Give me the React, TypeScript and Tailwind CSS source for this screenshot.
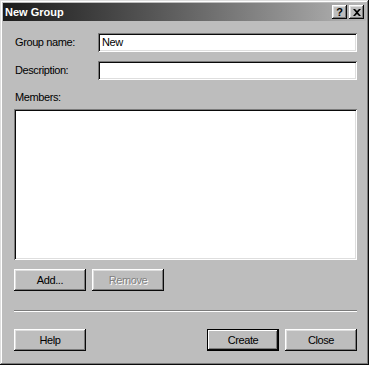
import React from 'react';

const raised =
  'shadow-[inset_-1px_-1px_#0a0a0a,inset_1px_1px_#ffffff,inset_-2px_-2px_#7b7b7b,inset_2px_2px_#dedede]';
const sunken =
  'shadow-[inset_1px_1px_#7b7b7b,inset_-1px_-1px_#ffffff,inset_2px_2px_#0a0a0a,inset_-2px_-2px_#dedede]';

const Button: React.FC<{ label: string; disabled?: boolean; isDefault?: boolean; className?: string }> = ({
  label,
  disabled,
  isDefault,
  className = '',
}) => (
  <button
    className={`h-[22px] w-[72px] bg-[#bdbdbd] text-[11px] tracking-[-0.4px] flex items-center justify-center ${
      isDefault
        ? 'border border-black shadow-[inset_-1px_-1px_#0a0a0a,inset_1px_1px_#ffffff,inset_-2px_-2px_#7b7b7b]'
        : raised
    } ${disabled ? 'text-[#808080] [text-shadow:1px_1px_0_#ffffff]' : 'text-black'} ${className}`}
  >
    {label}
  </button>
);

const TitleButton: React.FC<{ children: React.ReactNode }> = ({ children }) => (
  <div className={`w-[15px] h-[14px] bg-[#bdbdbd] flex items-center justify-center ${raised}`}>{children}</div>
);

export default function App() {
  return (
    <div
      className="w-[369px] h-[365px] bg-[#bdbdbd] p-[3px] flex flex-col shadow-[inset_-1px_-1px_#0a0a0a,inset_1px_1px_#dedede,inset_-2px_-2px_#7b7b7b,inset_2px_2px_#ffffff]"
      style={{ fontFamily: '"Liberation Sans", Arial, sans-serif' }}
    >
      {/* title bar */}
      <div className="h-[18px] bg-gradient-to-r from-[#1c1c1c] to-[#b6b6b6] flex items-center pl-[2px] pr-[2px]">
        <span className="text-white font-bold text-[11px] leading-none">New Group</span>
        <div className="ml-auto flex gap-[2px]">
          <TitleButton>
            <span className="text-[11px] font-bold leading-none text-black">?</span>
          </TitleButton>
          <TitleButton>
            <svg width="8" height="7" viewBox="0 0 8 7">
              <path d="M0 0h2l2 2 2-2h2L5 3.5 8 7H6L4 5 2 7H0l3-3.5z" fill="#000" />
            </svg>
          </TitleButton>
        </div>
      </div>

      {/* body */}
      <div className="flex flex-col pl-[11px] pr-[9px] text-[11px] tracking-[-0.4px] text-black">
        <div className="flex items-center mt-[12px] h-[19px]">
          <span className="w-[84px] pl-[1px]">Group name:</span>
          <div className={`flex-1 h-[19px] bg-white flex items-center pl-[4px] ${sunken}`}>New</div>
        </div>
        <div className="flex items-center mt-[9px] h-[19px]">
          <span className="w-[84px] pl-[1px]">Description:</span>
          <div className={`flex-1 h-[19px] bg-white ${sunken}`} />
        </div>
        <div className="mt-[11px] pl-[1px] leading-[13px]">Members:</div>
        <div className={`mt-[5px] h-[151px] bg-white ${sunken}`} />
        <div className="flex gap-[6px] mt-[9px]">
          <Button label="Add..." />
          <Button label="Remove" disabled className="w-[71px]" />
        </div>
        <div className="mt-[19px] h-[2px] border-t border-[#7b7b7b] border-b border-b-white" />
        <div className="flex mt-[17px]">
          <Button label="Help" />
          <Button label="Create" isDefault className="ml-auto" />
          <Button label="Close" className="ml-[6px] w-[71px]" />
        </div>
      </div>
    </div>
  );
}
